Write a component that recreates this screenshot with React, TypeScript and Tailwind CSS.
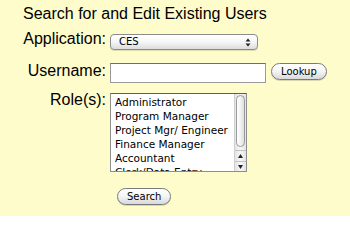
import { ChangeEvent, useState } from 'react'

const roles = [
  'Administrator',
  'Program Manager',
  'Project Mgr/ Engineer',
  'Finance Manager',
  'Accountant',
  'Clerk/Data Entry',
]

const labelFont = { fontFamily: '"Liberation Sans", Arial, sans-serif' }
const uiFont = { fontFamily: '"DejaVu Sans", "Noto Sans", sans-serif' }

function AquaButton({ label }: { label: string }) {
  return (
    <button
      type="button"
      style={uiFont}
      className="h-[17px] rounded-full border border-[#7a7a7a] bg-gradient-to-b from-white via-[#f4f4f4] to-[#d9d9d9] px-[9px] text-[10px] leading-[15px] text-black shadow-[0_1px_0_rgba(0,0,0,0.15)]"
    >
      {label}
    </button>
  )
}

export default function App() {
  const [username, setUsername] = useState('')

  return (
    <div className="h-[216px] w-[350px] overflow-hidden bg-[#fffccc] pt-[5px]" style={labelFont}>
      <h1 className="pl-[23px] text-[16px] font-normal leading-[18px] text-black">
        Search for and Edit Existing Users
      </h1>

      <div className="mt-[7px] flex items-start">
        <label className="w-[106px] text-right text-[16px] leading-[18px] text-black">Application:</label>
        <div className="ml-[4px] mt-[4px] flex h-[16px] w-[148px] items-center rounded-[4px] border border-[#8c8c8c] bg-gradient-to-b from-white via-[#f6f6f6] to-[#dcdcdc] shadow-[0_1px_0_rgba(0,0,0,0.12)]">
          <span style={uiFont} className="flex-1 pl-[8px] text-[10px] leading-[14px] text-black">
            CES
          </span>
          <svg width="6" height="9" viewBox="0 0 6 9" className="mr-[6px]">
            <path d="M3 0.5 L5.5 3.5 L0.5 3.5 Z" fill="#222" />
            <path d="M3 8.5 L5.5 5.5 L0.5 5.5 Z" fill="#222" />
          </svg>
        </div>
      </div>

      <div className="mt-[12px] flex items-start">
        <label className="w-[106px] text-right text-[16px] leading-[18px] text-black">Username:</label>
        <input
          value={username}
          onChange={(e: ChangeEvent<HTMLInputElement>) => setUsername(e.target.value)}
          className="ml-[4px] mt-[1px] h-[20px] w-[156px] border border-[#9a9a9a] border-t-[#6e6e6e] bg-white px-[3px] text-[11px] outline-none"
        />
        <div className="ml-[5px] mt-[1px] flex">
          <AquaButton label="Lookup" />
        </div>
      </div>

      <div className="mt-[8px] flex items-start">
        <label className="w-[106px] text-right text-[16px] leading-[18px] text-black">Role(s):</label>
        <div className="ml-[4px] mt-[2px] flex h-[79px] w-[137px] overflow-hidden border border-[#8e8e8e] border-t-[#5e5e5e] bg-white">
          <ul style={uiFont} className="flex-1 pl-[4px] pt-[1px] text-[10.5px] leading-[14px] text-black">
            {roles.map((r) => (
              <li key={r} className="whitespace-nowrap">
                {r}
              </li>
            ))}
          </ul>
          <div className="flex w-[12px] flex-col border-l border-[#cfcfcf] bg-gradient-to-r from-[#e4e4e4] via-[#f7f7f7] to-[#e4e4e4]">
            <div className="mx-[1px] mt-[1px] h-[52px] rounded-full border border-[#9a9a9a] bg-gradient-to-r from-white via-[#f2f2f2] to-[#dedede]" />
            <div className="flex-1" />
            <div className="flex h-[11px] items-center justify-center border-t border-[#c4c4c4]">
              <svg width="5" height="4" viewBox="0 0 5 4">
                <path d="M2.5 0 L5 4 L0 4 Z" fill="#222" />
              </svg>
            </div>
            <div className="flex h-[10px] items-center justify-center border-t border-[#c4c4c4]">
              <svg width="5" height="4" viewBox="0 0 5 4">
                <path d="M2.5 4 L5 0 L0 0 Z" fill="#222" />
              </svg>
            </div>
          </div>
        </div>
      </div>

      <div className="mt-[16px] flex pl-[117px]">
        <AquaButton label="Search" />
      </div>
    </div>
  )
}
